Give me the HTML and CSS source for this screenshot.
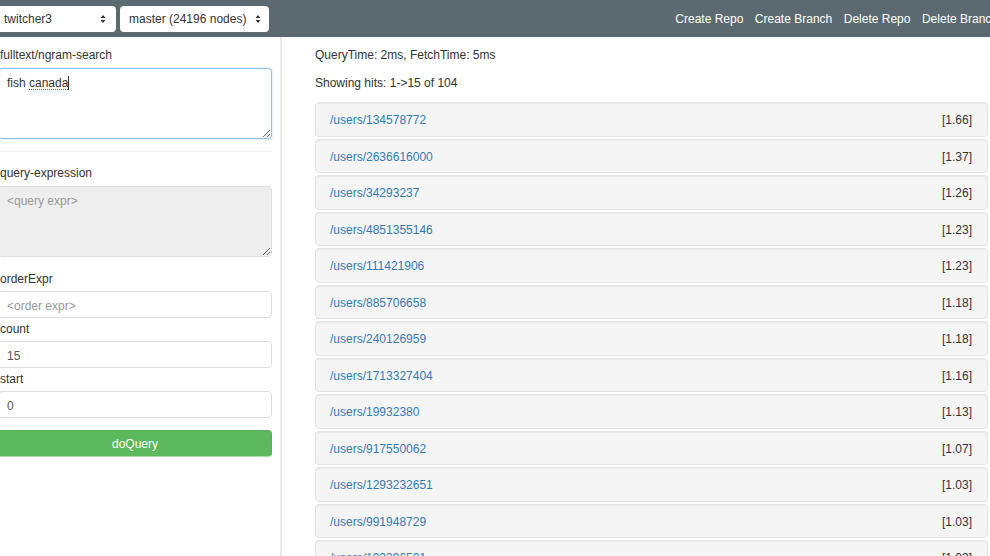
FILE: index.html
```html
<!DOCTYPE html>
<html>
<head>
<meta charset="utf-8">
<link rel="stylesheet" href="styles.css">
</head>
<body>
<nav class="navbar">
  <div class="nav-left">
    <div class="select select-repo"><span>twitcher3</span>
      <svg class="arrows" width="6" height="10" viewBox="0 0 6 10"><path d="M0.5 4 L3 1 L5.5 4 Z M0.5 6 L3 9 L5.5 6 Z" fill="#333"/></svg>
    </div>
    <div class="select select-branch"><span>master (24196 nodes)</span>
      <svg class="arrows" width="6" height="10" viewBox="0 0 6 10"><path d="M0.5 4 L3 1 L5.5 4 Z M0.5 6 L3 9 L5.5 6 Z" fill="#333"/></svg>
    </div>
  </div>
  <div class="nav-links">
    <a>Create Repo</a>
    <a>Create Branch</a>
    <a>Delete Repo</a>
    <a>Delete Branch</a>
  </div>
</nav>
<div class="main">
  <div class="sidebar">
    <label class="first">fulltext/ngram-search</label>
    <div class="textarea focused">fish <span class="misspelled">canada</span><span class="caret"></span></div>
    <hr class="sep">
    <label class="after-sep">query-expression</label>
    <textarea class="textarea disabled" placeholder="<query expr>" readonly></textarea>
    <label class="gap-top">orderExpr</label>
    <input class="input" placeholder="<order expr>">
    <label class="gap-small">count</label>
    <input class="input" value="15">
    <label class="gap-small">start</label>
    <input class="input" value="0">
    <button class="btn">doQuery</button>
  </div>
  <div class="results">
    <p class="stat">QueryTime: 2ms, FetchTime: 5ms</p>
    <p class="stat hits">Showing hits: 1-&gt;15 of 104</p>
    <ul class="hit-list">
      <li class="hit"><a>/users/134578772</a><span>[1.66]</span></li>
      <li class="hit"><a>/users/2636616000</a><span>[1.37]</span></li>
      <li class="hit"><a>/users/34293237</a><span>[1.26]</span></li>
      <li class="hit"><a>/users/4851355146</a><span>[1.23]</span></li>
      <li class="hit"><a>/users/111421906</a><span>[1.23]</span></li>
      <li class="hit"><a>/users/885706658</a><span>[1.18]</span></li>
      <li class="hit"><a>/users/240126959</a><span>[1.18]</span></li>
      <li class="hit"><a>/users/1713327404</a><span>[1.16]</span></li>
      <li class="hit"><a>/users/19932380</a><span>[1.13]</span></li>
      <li class="hit"><a>/users/917550062</a><span>[1.07]</span></li>
      <li class="hit"><a>/users/1293232651</a><span>[1.03]</span></li>
      <li class="hit"><a>/users/991948729</a><span>[1.03]</span></li>
      <li class="hit"><a>/users/192396501</a><span>[1.03]</span></li>
      <li class="hit"><a>/users/70542318</a><span>[1.01]</span></li>
      <li class="hit"><a>/users/3300172</a><span>[0.98]</span></li>
    </ul>
  </div>
</div>
</body>
</html>
```

FILE: styles.css
```css
html, body {
  margin: 0;
  padding: 0;
  overflow: hidden;
  height: 556px;
}
body {
  font-family: "Helvetica Neue", "Liberation Sans", Arial, sans-serif;
  font-size: 12px;
  line-height: 17px;
  color: #333;
  background: #fff;
}
.navbar {
  height: 37px;
  width: 1010px;
  background: #5b6a71;
  display: flex;
  align-items: center;
  justify-content: space-between;
  padding-right: 12px;
  box-sizing: border-box;
}
.nav-left {
  display: flex;
  gap: 4px;
  margin-left: -5px;
}
.select {
  height: 26px;
  box-sizing: border-box;
  background: #fff;
  border-radius: 4px;
  display: flex;
  align-items: center;
  justify-content: space-between;
  color: #333;
  font-size: 12px;
  padding-top: 1px;
}
.select-repo {
  width: 121px;
  padding-left: 9px;
  padding-right: 10px;
}
.select-branch {
  width: 149px;
  padding-left: 9px;
  padding-right: 8px;
}
.arrows {
  display: block;
}
.nav-links {
  display: flex;
  gap: 11.5px;
  padding-top: 2px;
}
.nav-links a {
  color: #fff;
  font-size: 12px;
}
.main {
  display: flex;
  height: 519px;
}
.sidebar {
  width: 274px;
  margin-left: -2px;
  padding: 8px 8px 0 0;
  border-right: 2px solid #eaeaea;
  display: flex;
  flex-direction: column;
  flex-shrink: 0;
}
.sidebar label {
  display: block;
  height: 17px;
  padding-top: 2px;
  margin-bottom: 3px;
  padding-left: 2px;
}
.sidebar label.first {
  margin-bottom: 4px;
}
.sidebar label.after-sep {
  padding-top: 1px;
  margin-bottom: 4px;
}
.textarea {
  display: block;
  box-sizing: border-box;
  width: 274px;
  height: 71px;
  margin: 0;
  padding: 6px 8px;
  border: 1px solid #ccc;
  border-radius: 4px;
  font-family: inherit;
  font-size: 12px;
  line-height: 17px;
  color: #555;
  resize: vertical;
  overflow: auto;
}
.textarea.focused {
  border-color: #8fc0e6;
  box-shadow: 0 0 2px rgba(102, 175, 233, 0.5);
  color: #333;
}
.misspelled {
  text-decoration: underline dotted #e23b3b;
  text-underline-offset: 2px;
}
.caret {
  display: inline-block;
  width: 1px;
  height: 14px;
  background: #333;
  vertical-align: -3px;
}
.textarea.disabled {
  background: #eee;
  border-color: #ddd;
  outline: none;
}
.textarea::placeholder, .input::placeholder {
  color: #999;
}
.sep {
  margin: 12px 0 12px;
  border: 0;
  border-top: 1px solid #eee;
  width: 274px;
}
.gap-top {
  margin-top: 12px;
}
.gap-small {
  margin-top: 1px;
}
.input {
  display: block;
  box-sizing: border-box;
  width: 274px;
  height: 27px;
  margin: 0;
  padding: 5px 8px 3px;
  border: 1px solid #ddd;
  border-radius: 4px;
  font-family: inherit;
  font-size: 12px;
  color: #555;
  outline: none;
}
.btn {
  margin-top: 12px;
  width: 274px;
  height: 27px;
  background: #5cb85c;
  border: 1px solid #56b356;
  border-bottom-color: #a9dca9;
  border-radius: 4px;
  color: #fff;
  font-family: inherit;
  font-size: 12px;
}
.results {
  flex: 1;
  padding: 10px 2px 0 33px;
  min-width: 0;
}
.stat {
  margin: 0 0 11px;
  height: 17px;
}
.stat.hits {
  margin-bottom: 10px;
}
.hit-list {
  list-style: none;
  margin: 0;
  padding: 0;
}
.hit {
  display: flex;
  justify-content: space-between;
  align-items: center;
  box-sizing: border-box;
  height: 34.5px;
  margin-bottom: 2px;
  padding: 3px 15px 0 14px;
  background: #f5f5f5;
  border: 1px solid #e3e3e3;
  border-radius: 4px;
  box-shadow: inset 0 1px 1px rgba(0, 0, 0, 0.05);
}
.hit a {
  color: #337ab7;
}
.hit span {
  color: #333;
}
```
